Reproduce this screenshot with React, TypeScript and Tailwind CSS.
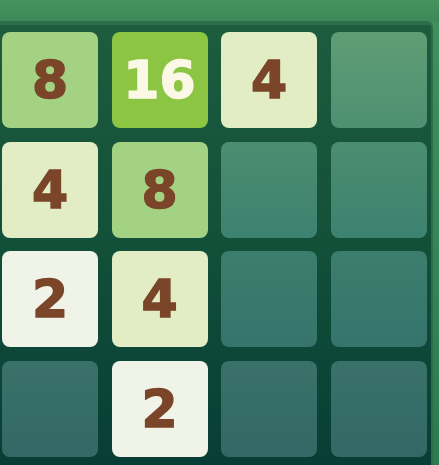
const board: (number | null)[][] = [
  [8, 16, 4, null],
  [4, 8, null, null],
  [2, 4, null, null],
  [null, 2, null, null],
];

const tileStyles: Record<number, string> = {
  2: "bg-[#f0f3e8] text-[#7a4528]",
  4: "bg-[#e2edc6] text-[#7a4528]",
  8: "bg-[#a4d283] text-[#7a4528]",
  16: "bg-[#8bc541] text-[#fbf8e6]",
};

// empty cells get darker and more teal row by row
const emptyRows = [
  "from-[#609d75] to-[#4d9071]",
  "from-[#4b8d70] to-[#3d8270]",
  "from-[#3c7e6e] to-[#36746c]",
  "from-[#3a7169] to-[#336866]",
];

function Tile({ value, row }: { value: number | null; row: number }) {
  if (value === null) {
    return (
      <div
        className={`h-[96px] w-[96px] rounded-[8px] bg-gradient-to-b ${emptyRows[row]}`}
      />
    );
  }
  return (
    <div
      className={`flex h-[96px] w-[96px] items-center justify-center rounded-[8px] text-[52px] font-bold leading-none [-webkit-text-stroke:1.5px_currentColor] ${tileStyles[value]}`}
    >
      {value}
    </div>
  );
}

export default function App() {
  return (
    <div
      className="flex h-[465px] w-[439px] flex-col overflow-hidden bg-gradient-to-b from-[#42905c] to-[#2d7a52]"
      style={{ fontFamily: '"DejaVu Sans", "Liberation Sans", sans-serif' }}
    >
      <div className="h-[21px] shrink-0 bg-gradient-to-b from-[#47935f] to-[#3c8857]" />
      <div className="mr-[6px] flex-1 rounded-tr-[6px] border-t-[4px] border-r-[2px] border-[#2d6e4a] bg-gradient-to-b from-[#1e5c3e] via-[#125039] to-[#083d35] pt-[7px] pl-[2px]">
        <div className="grid grid-cols-[repeat(4,96px)] gap-[13.5px]">
          {board.map((row, r) =>
            row.map((v, c) => <Tile key={`${r}-${c}`} value={v} row={r} />)
          )}
        </div>
      </div>
    </div>
  );
}
